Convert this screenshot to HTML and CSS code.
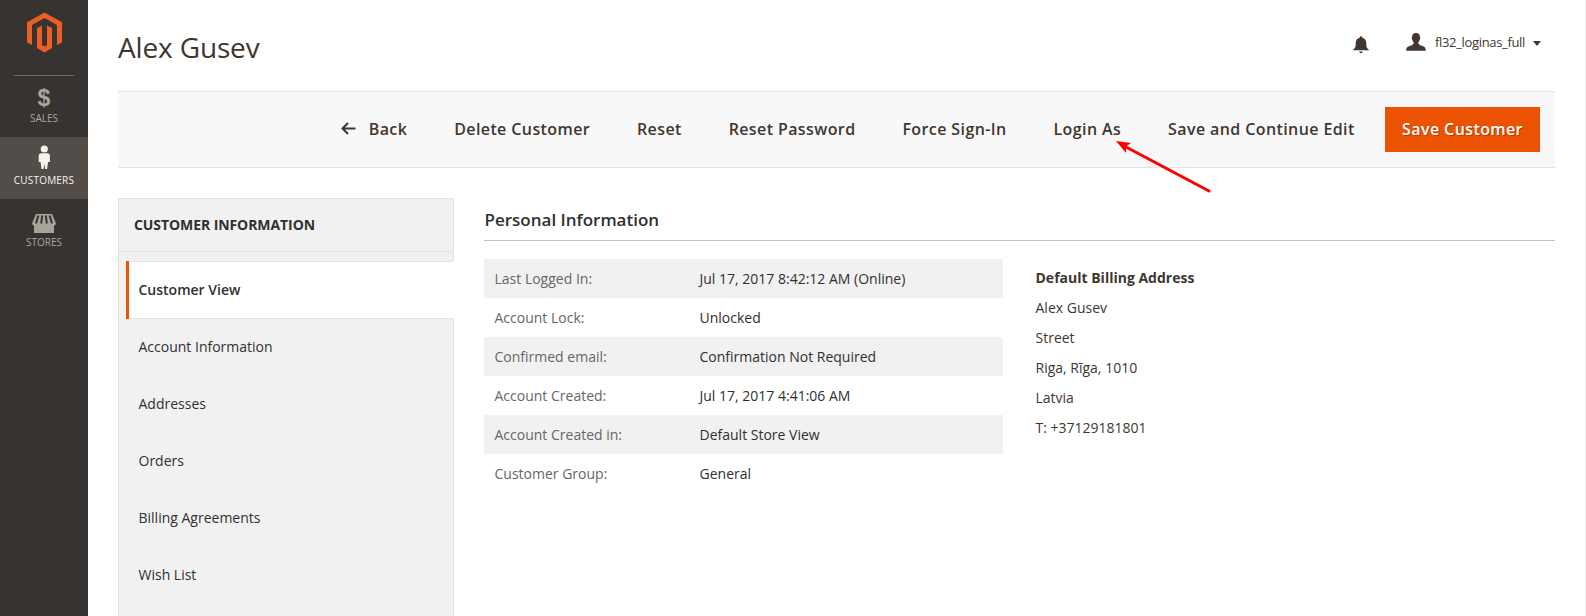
FILE: index.html
```html
<!DOCTYPE html>
<html lang="en">
<head>
<meta charset="utf-8">
<title>Alex Gusev / Customers</title>
<link rel="stylesheet" href="styles.css">
</head>
<body>
<div class="app">
  <nav class="sidebar">
    <a class="logo">
      <svg width="36" height="41" viewBox="0 0 36 41" fill="#eb5f25">
        <path d="M18.500 0.500 36 10.300V30.300L31 33V13L18.500 6 6 13V33L1 30.300V10.300Z"/>
        <path d="M16 13.500V33L18.500 34.500 21 33V13.500L26 16V36L18.500 40.500 11 36V16Z"/>
      </svg>
    </a>
    <ul class="menu">
      <li class="menu-item"><span class="menu-icon dollar">$</span><span class="sales">SALES</span></li>
      <li class="menu-item active">
        <svg class="menu-icon" width="12" height="25" viewBox="0 0 12 25" fill="#f7f3eb">
          <circle cx="6.300" cy="4" r="3.600"/>
          <path d="M3.300 8.300H9.300Q11.900 8.300 11.900 11V17H10L9.100 24H7.100L6.300 18.500 5.500 24H3.500L2.600 17H.7V11Q.7 8.300 3.300 8.300Z"/>
        </svg>
        <span class="customers">CUSTOMERS</span>
      </li>
      <li class="menu-item">
        <svg class="menu-icon store" width="24" height="20" viewBox="0 0 24 20">
          <path fill="#a9a399" d="M4 0H20L24 9.500Q23.500 11.500 22 11.500V19H2V11.500Q.5 11.500 0 9.500Z"/>
          <path stroke="#373330" stroke-width="2" d="M6.400 1.500 3.900 9.500M10.200 1.500 9.200 9.500M13.800 1.500 14.800 9.500M17.600 1.500 20.100 9.500"/>
        </svg>
        <span>STORES</span>
      </li>
    </ul>
  </nav>

  <main class="page">
    <header class="header">
      <h1>Alex Gusev</h1>
      <div class="header-tools">
        <svg class="bell" width="16" height="18" viewBox="0 0 16 18" fill="#41362f">
          <path d="M8 0.300Q9.200.3 9.400 1.700C12.500 2.500 13.300 5 13.300 8 13.300 11.500 14.200 12.300 15.700 13.400V14.300H.3V13.400C1.800 12.300 2.700 11.500 2.700 8 2.700 5 3.500 2.500 6.600 1.700Q6.800.3 8 .3ZM6.200 15.600H9.800Q9.400 17.200 8 17.200T6.200 15.600Z"/>
        </svg>
        <div class="user">
          <svg width="20" height="18" viewBox="0 0 20 18" fill="#41362f">
            <path d="M10 0C12.800 0 14 1.600 14 4.500 14.500 5 14.200 6.300 13.600 6.800 13.300 8.300 12.600 9 12.300 9.800 12.300 11.600 13.500 12 15.500 12.700 18.500 13.700 19.800 14.300 19.800 17.700H.2C.2 14.300 1.500 13.700 4.500 12.700 6.500 12 7.700 11.600 7.700 9.800 7.400 9 6.700 8.300 6.400 6.800 5.800 6.300 5.500 5 6 4.500 6 1.600 7.200 0 10 0Z"/>
          </svg>
          <span class="user-name">fl32_loginas_full</span>
          <svg class="caret" width="8" height="5" viewBox="0 0 8 5" fill="#41362f"><path d="M0 0H8L4 5Z"/></svg>
        </div>
      </div>
    </header>

    <div class="toolbar">
      <button class="btn back">
        <svg width="15" height="13" viewBox="0 0 15 13" fill="none" stroke="#41362f" stroke-width="2"><path d="M14.500 6.500H2M7 1 1.500 6.500 7 12"/></svg>
        <span>Back</span>
      </button>
      <button class="btn">Delete Customer</button>
      <button class="btn">Reset</button>
      <button class="btn">Reset Password</button>
      <button class="btn">Force Sign-In</button>
      <button class="btn login-as">Login As
        <svg class="pointer" width="96" height="54" viewBox="0 0 96 54">
          <path d="M93 51 10 7" stroke="#f00" stroke-width="3" stroke-linecap="round"/>
          <path d="M0 1 15 3 10 6.500 10 13Z" fill="#f00"/>
        </svg>
      </button>
      <button class="btn">Save and Continue Edit</button>
      <button class="btn primary">Save Customer</button>
    </div>

    <div class="columns">
      <aside class="tabs">
        <h2>CUSTOMER INFORMATION</h2>
        <ul>
          <li class="tab current">Customer View</li>
          <li class="tab">Account Information</li>
          <li class="tab">Addresses</li>
          <li class="tab">Orders</li>
          <li class="tab">Billing Agreements</li>
          <li class="tab">Wish List</li>
        </ul>
      </aside>
      <section class="content">
        <h3>Personal Information</h3>
        <div class="details">
          <table class="info">
            <tr><th>Last Logged In:</th><td>Jul 17, 2017 8:42:12 AM (Online)</td></tr>
            <tr><th>Account Lock:</th><td>Unlocked</td></tr>
            <tr><th>Confirmed email:</th><td>Confirmation Not Required</td></tr>
            <tr><th>Account Created:</th><td>Jul 17, 2017 4:41:06 AM</td></tr>
            <tr><th>Account Created in:</th><td>Default Store View</td></tr>
            <tr><th>Customer Group:</th><td>General</td></tr>
          </table>
          <address class="address">
            <strong>Default Billing Address</strong><br>
            Alex Gusev<br>Street<br>Riga, Rīga, 1010<br>Latvia<br>T: +37129181801
          </address>
        </div>
      </section>
    </div>
  </main>
</div>
</body>
</html>
```
FILE: styles.css
```css
* { box-sizing: border-box; }

body {
  margin: 0;
  font-family: "Open Sans", "Noto Sans", sans-serif;
  font-size: 14px;
  color: #41362f;
  background: #fff;
}

h1, h2, h3, ul { margin: 0; padding: 0; }
ul { list-style: none; }
svg { display: block; flex: none; }

.app {
  display: flex;
  height: 616px;
  overflow: hidden;
  border-right: 1px solid #efefef;
}

.sidebar {
  flex: none;
  width: 88px;
  background: #373330;
}

.logo {
  display: flex;
  justify-content: center;
  height: 76px;
  margin: 0 14px;
  padding-top: 12px;
  border-bottom: 1px solid #736963;
}

.menu-item {
  display: flex;
  flex-direction: column;
  align-items: center;
  height: 62px;
  padding-top: 7px;
  font-size: 10px;
  line-height: 14px;
  color: #aaa69f;
}
.menu-item:first-child { height: 61px; }
.menu-item.active { background: #524d49; color: #f7f3eb; }
.menu-icon { height: 25px; margin-bottom: 4px; }
.active .menu-icon { margin: 1px 0 3px; }
.menu-icon.store { height: 20px; margin: 8px 0 1px; }
.dollar {
  margin-bottom: 3px;
  font: bold 23px/31px "Liberation Sans", sans-serif;
}
.customers { letter-spacing: 0.2px; }

.page {
  flex: 1;
  padding: 0 30px;
}

.header {
  display: flex;
  justify-content: space-between;
  height: 91px;
}
.header h1 {
  padding-top: 28px;
  font-size: 28px;
  font-weight: 400;
  line-height: 38px;
  letter-spacing: -0.15px;
}
.header-tools {
  display: flex;
  align-items: flex-start;
  gap: 37px;
  padding: 33px 14px 0 0;
}
.bell { margin-top: 3px; }
.user { display: flex; }
.user-name {
  margin: 0 8px 0 9px;
  font-size: 13px;
  line-height: 18px;
  letter-spacing: -0.33px;
}
.caret { margin-top: 8px; }

.toolbar {
  display: flex;
  align-items: center;
  justify-content: flex-end;
  gap: 46.900px;
  height: 77px;
  padding-right: 15px;
  background: #f8f8f8;
  border: solid #e3e3e3;
  border-width: 1px 0;
}
.btn {
  padding: 0 0 2px;
  border: 0;
  background: none;
  color: #41362f;
  font: 600 16px/22px "Open Sans", "Noto Sans", sans-serif;
  letter-spacing: 0.4px;
  white-space: nowrap;
}
.back { display: flex; align-items: center; gap: 13px; }
.primary {
  width: 155px;
  height: 45px;
  margin-left: -16.600px;
  background: #eb5202;
  color: #fff;
  text-shadow: 1px 1px 0 rgba(0, 0, 0, 0.25);
}
.login-as { position: relative; }
.pointer {
  position: absolute;
  left: 62px;
  top: 22px;
}

.columns {
  display: flex;
  gap: 30px;
  padding-top: 30px;
}

.tabs {
  flex: none;
  width: 336px;
  height: 430px;
  background: #f1f1f1;
  border: 1px solid #e3e3e3;
  color: #303030;
}
.tabs h2 {
  height: 53px;
  padding-left: 15px;
  border-bottom: 1px solid #e3e3e3;
  font-size: 14px;
  font-weight: 700;
  line-height: 51px;
  letter-spacing: -0.08px;
}
.tabs ul { padding: 9px 0 0 7px; }
.tab {
  height: 57px;
  padding-left: 12.500px;
  line-height: 56px;
}
.tab.current {
  height: 58px;
  margin-right: -1px;
  background:
    linear-gradient(#eb5202, #eb5202) left / 3px 100% no-repeat border-box,
    linear-gradient(#e3e3e3, #e3e3e3) top / 100% 1px no-repeat border-box,
    linear-gradient(#e3e3e3, #e3e3e3) bottom / 100% 1px no-repeat border-box,
    #fff;
  line-height: 58px;
  font-weight: 600;
}

.content { flex: 1; }
.content h3 {
  height: 43px;
  padding-left: 0.500px;
  border-bottom: 1px solid #cac3b4;
  font-size: 17px;
  font-weight: 600;
  line-height: 44px;
  color: #303030;
}
.details {
  display: flex;
  gap: 32.500px;
  padding-top: 18px;
}
.info {
  width: 519px;
  height: 234px;
  border-collapse: collapse;
  table-layout: fixed;
  line-height: 19px;
}
.info tr { height: 39px; }
.info tr:nth-child(odd) { background: #f1f1f1; }
.info th, .info td { padding: 0 10px 0 10.500px; text-align: left; }
.info th { width: 205px; font-weight: 400; color: #666; }
.info td { color: #303030; }
.address {
  padding-top: 4px;
  font-style: normal;
  line-height: 30px;
}
```
